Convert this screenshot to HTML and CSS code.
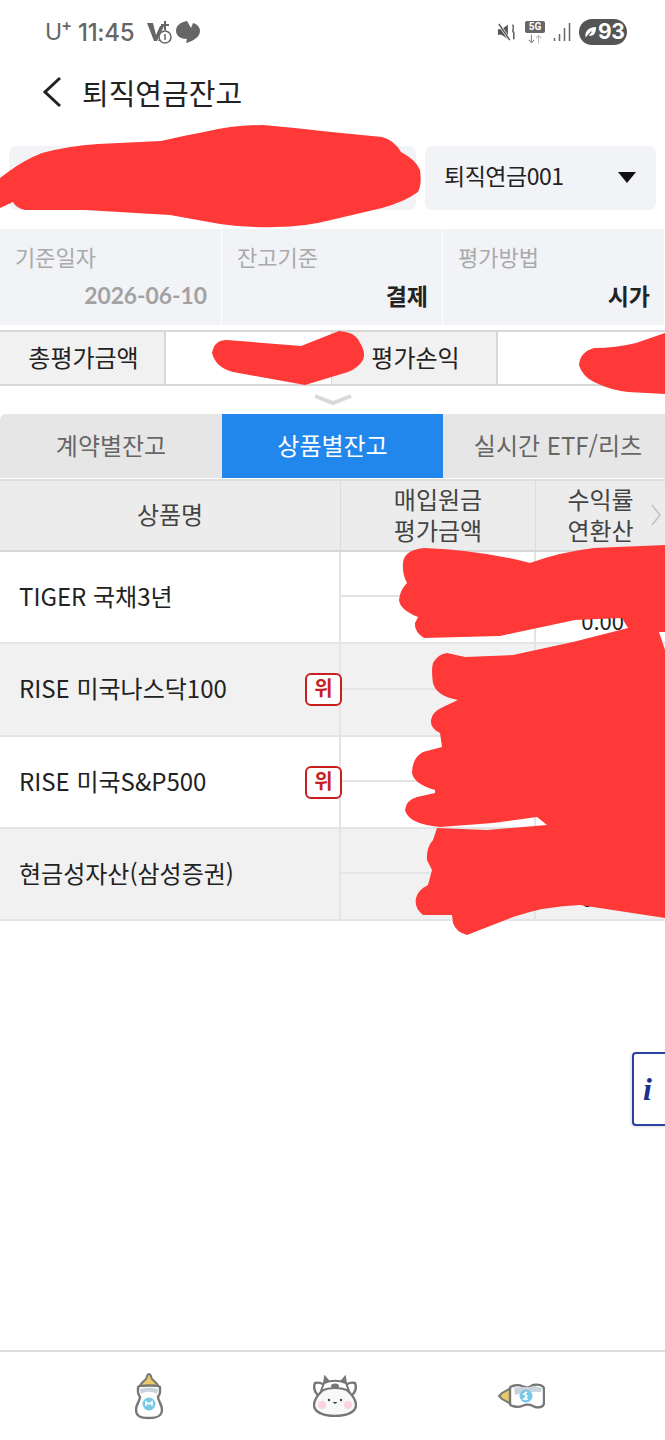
FILE: index.html
```html
<!DOCTYPE html>
<html lang="ko">
<head>
<meta charset="utf-8">
<title>퇴직연금잔고</title>
<link rel="stylesheet" href="styles.css">
</head>
<body>
<div class="page">
  <div class="status">
    <div class="status-left">
      <span class="carrier">U<sup>+</sup></span>
      <span class="clock">11:45</span>
      <svg class="st-v" viewBox="0 0 26 24"><path d="M1 3h6l3 12 4-9h4l-7 15H8z" fill="#666"/><path d="M19 1v9M15 5h8" stroke="#666" stroke-width="2"/><path d="M12 21l7-10 6 10z" fill="#666"/><circle cx="19" cy="17" r="6" fill="#fff" stroke="#666" stroke-width="1.5"/><path d="M19 14v6" stroke="#666" stroke-width="1.5"/></svg>
      <svg class="st-chat" viewBox="0 0 26 24"><path d="M12 1c-6 1-11 4-11 10 0 5 5 8 11 8l-1 4c7-2 14-6 14-12 0-4-3-7-7-8l-2 5z" fill="#666"/></svg>
    </div>
    <div class="status-right">
      <svg class="st-mute" viewBox="0 0 22 22"><path d="M1 8h4l7-5v16l-7-5H1z" fill="#555"/><path d="M2 2l12 18" stroke="#fff" stroke-width="3"/><path d="M2 2l12 18" stroke="#555" stroke-width="1.6"/><path d="M17 3c3 3-1 5 1 8s-1 5 1 8" fill="none" stroke="#555" stroke-width="1.6"/></svg>
      <div class="st-5g"><span class="st-5g-box">5G</span><svg class="st-arrows" viewBox="0 0 18 10"><path d="M5 0v9M2 6l3 3 3-3" fill="none" stroke="#888" stroke-width="1.2"/><path d="M13 10V1M10 4l3-3 3 3" fill="none" stroke="#bbb" stroke-width="1.2"/></svg></div>
      <svg class="st-signal" viewBox="0 0 18 20"><path d="M1.5 16v3M6.5 12v7M11.500 6v13M16.500 1v18" stroke="#666" stroke-width="1.500"/></svg>
      <div class="battery"><svg class="leaf" viewBox="0 0 14 14"><path d="M2 13C0 7 4 1 13 1c0 8-4 11-9 9z" fill="#fff"/><path d="M2 13l6-7" stroke="#555" stroke-width="1.2"/></svg><span>93</span></div>
    </div>
  </div>

  <header class="title-bar">
    <svg class="back" viewBox="0 0 20 32"><path d="M18 2L3 16l15 14" fill="none" stroke="#222" stroke-width="3"/></svg>
    <h1 class="title">퇴직연금잔고</h1>
  </header>

  <div class="selectors">
    <div class="select select-account"></div>
    <div class="select select-plan"><span class="plan-name">퇴직연금001</span><span class="caret"></span></div>
  </div>

  <div class="info">
    <div class="info-cell"><div class="info-label">기준일자</div><div class="info-value muted">2026-06-10</div></div>
    <div class="info-cell"><div class="info-label">잔고기준</div><div class="info-value">결제</div></div>
    <div class="info-cell"><div class="info-label">평가방법</div><div class="info-value">시가</div></div>
  </div>

  <div class="summary">
    <div class="sum-label">총평가금액</div>
    <div class="sum-value"></div>
    <div class="sum-label">평가손익</div>
    <div class="sum-value"></div>
  </div>

  <div class="fold"><svg class="fold-icon" viewBox="0 0 40 12"><path d="M2 2l18 7 18-7" fill="none" stroke="#d9d9d9" stroke-width="4"/></svg></div>

  <div class="tabs">
    <div class="tab">계약별잔고</div>
    <div class="tab tab-on">상품별잔고</div>
    <div class="tab tab-last">실시간 ETF/리츠</div>
  </div>

  <div class="table">
    <div class="thead">
      <div class="th">상품명</div>
      <div class="th">매입원금<br>평가금액</div>
      <div class="th">수익률<br>연환산</div>
      <svg class="more" viewBox="0 0 12 24"><path d="M2 2l8 10-8 10" fill="none" stroke="#c4c4c4" stroke-width="1.600"/></svg>
    </div>
    <div class="row">
      <div class="name"><span class="name-text">TIGER 국채3년</span></div>
      <div class="pair"><div></div><div></div></div>
      <div class="pair"><div></div><div class="num">0.00</div></div>
    </div>
    <div class="row alt tall">
      <div class="name"><span class="name-text">RISE 미국나스닥100</span><span class="badge">위</span></div>
      <div class="pair"><div></div><div></div></div>
      <div class="pair"><div></div><div></div></div>
    </div>
    <div class="row">
      <div class="name"><span class="name-text">RISE 미국S&amp;P500</span><span class="badge">위</span></div>
      <div class="pair"><div></div><div></div></div>
      <div class="pair"><div></div><div></div></div>
    </div>
    <div class="row alt">
      <div class="name"><span class="name-text">현금성자산(삼성증권)</span></div>
      <div class="pair"><div></div><div></div></div>
      <div class="pair"><div></div><div class="num">0.00</div></div>
    </div>
  </div>

  <footer class="nav">
    <svg class="nav-bottle" viewBox="0 0 28 48">
      <path d="M14 2c2 0 2 3 3 5 2 2 6 4 7 9H4c1-5 5-7 7-9 1-2 1-5 3-5z" fill="#e8c868" stroke="#777" stroke-width="2"/>
      <path d="M3 15c0-2 22-2 22 0v5c0 2-1 3-2 5 0 4 4 7 4 13 0 6-4 8-13 8S1 44 1 38c0-6 4-9 4-13-1-2-2-3-2-5z" fill="#fff" stroke="#777" stroke-width="2.400"/>
      <path d="M5 17c6-2 12-2 18 0l-1 5c-5-3-11-3-16 0z" fill="#c9d3dc"/>
      <circle cx="14" cy="32" r="6.500" fill="#79c8ea"/>
      <path d="M11 34v-4l3 2 3-2v4" fill="none" stroke="#fff" stroke-width="1.600"/>
    </svg>
    <svg class="nav-cow" viewBox="0 0 44 42">
      <path d="M11 9l1-7 5 6M33 9l-1-7-5 6" fill="#8a7f7f" stroke="#777" stroke-width="2"/>
      <path d="M7 22C2 18 0 13 2 8c4-1 7 0 9 2 7-3 15-3 22 0 2-2 5-3 9-2 2 5 0 10-5 14z" fill="#fff" stroke="#777" stroke-width="2.400"/>
      <path d="M8 17c3-4 7-6 14-6s11 2 14 6c4 4 7 8 7 13 0 7-9 11-21 11S1 37 1 30c0-5 3-9 7-13z" fill="#f8f8f8" stroke="#777" stroke-width="2.400"/>
      <path d="M11 8c7-3 15-3 22 0l3 8c-8-4-20-4-28 0z" fill="#fff" stroke="#777" stroke-width="2"/>
      <ellipse cx="22" cy="11" rx="4" ry="2.500" fill="#777"/>
      <circle cx="9" cy="30" r="4" fill="#fbd3dc"/><circle cx="35" cy="30" r="4" fill="#fbd3dc"/>
      <circle cx="16" cy="25" r="1.200" fill="#444"/><circle cx="28" cy="25" r="1.200" fill="#444"/>
      <path d="M19.500 27h5l-2.500 2z" fill="#444"/>
    </svg>
    <svg class="nav-side" viewBox="0 0 48 28">
      <path d="M14 6L5 11l-3 3 3 3 9 5z" fill="#e8c868" stroke="#777" stroke-width="2"/>
      <path d="M13 6c0-2 8-4 12-2 5 2 7 2 11-1 5-1 11 0 11 4v14c0 4-5 5-9 4-5-3-8-3-13-1-4 2-12 0-12-2z" fill="#fff" stroke="#777" stroke-width="2.400"/>
      <path d="M17 6c8-2 14 0 20-2l8 2-1 4c-9-1-18 0-26 3z" fill="#c9d3dc"/>
      <circle cx="29" cy="14" r="6.500" fill="#79c8ea"/>
      <path d="M30 10l-3 2 3 2-3 3h4" fill="none" stroke="#fff" stroke-width="1.600"/>
    </svg>
  </footer>

  <div class="info-btn"><span>i</span></div>

  <svg class="scribble" viewBox="0 0 665 1440">
    <path d="M0 178L8 172Q24 160 42 153Q68 146 98 144L161 141Q182 136 204 132Q234 125 263 125Q298 128 331 132L382 137Q394 140 401 152Q416 160 420 170Q422 184 418 192Q404 202 382 208L331 220Q304 227 276 227Q246 228 220 224L170 215L85 210L25 210Q16 208 13 202L0 208Z"/>
    <path d="M212 353Q214 340 227 340L301 346L339 331Q356 332 360 343Q366 352 363 360Q358 368 348 372L305 385L233 372Q216 368 212 353Z"/>
    <path d="M665 333L636 343Q616 348 594 348Q580 352 579 365Q582 376 594 382Q610 390 628 392L665 394Z"/>
    <path d="M403 563Q404 550 424 548Q480 550 530 563Q560 552 594 548L665 545L665 632L659 632L665 650L665 918L580 905Q545 906 513 917L467 935Q456 932 453 923L452 915L423 915Q414 908 416 898Q418 890 428 885L432 870L427 860Q426 848 433 840L437 828L487 830L547 825L537 817L493 823L440 827Q408 824 405 810Q406 800 417 797L435 793L435 790Q414 784 412 773Q412 758 423 752L442 747L440 733Q430 728 431 720Q432 712 443 707L458 700Q436 696 433 683Q431 670 433 663Q438 654 447 653L465 657L513 655L573 642L628 628L622 618L575 620L500 636L424 638Q414 632 415 623L418 617Q400 610 399 600Q400 590 407 583Q402 574 403 563Z"/>
  </svg>
</div>
</body>
</html>
```
FILE: styles.css
```css
* { box-sizing: border-box; }
html, body { margin: 0; padding: 0; background: #fff; }
.page {
  position: relative;
  width: 665px;
  height: 1440px;
  overflow: hidden;
  display: flex;
  flex-direction: column;
  font-family: "Noto Sans CJK KR", "Noto Sans", sans-serif;
  color: #222;
}

.status {
  height: 62px;
  display: flex;
  justify-content: space-between;
  align-items: center;
  padding: 2px 38px 0 45px;
  color: #666;
}
.status-left, .status-right { display: flex; align-items: center; }
.carrier { font: 400 23px "Inter", sans-serif; width: 33px; letter-spacing: -1px; }
.carrier sup { font-size: 16px; line-height: 0; font-weight: 600; }
.clock { font: 500 24px "Inter", sans-serif; width: 68px; letter-spacing: -0.3px; }
.st-v { width: 26px; height: 24px; margin-right: 3px; }
.st-chat { width: 26px; height: 24px; }
.st-mute { width: 20px; height: 22px; margin-right: 8px; }
.st-5g { width: 20px; margin-right: 8px; display: flex; flex-direction: column; align-items: center; gap: 1px; }
.st-5g-box { background: #666; color: #fff; font: 700 10px/12px "Roboto", sans-serif; width: 20px; text-align: center; border-radius: 2px; }
.st-arrows { width: 16px; height: 10px; }
.st-signal { width: 18px; height: 20px; margin-right: 8px; }
.battery {
  width: 48px;
  height: 26px;
  border-radius: 13px;
  background: #555;
  color: #fff;
  display: flex;
  align-items: center;
  padding-left: 5px;
  gap: 1px;
  font: 700 21px/26px "Inter", sans-serif;
  letter-spacing: -0.5px;
}
.leaf { width: 13px; height: 13px; flex: none; }

.title-bar { height: 60px; display: flex; align-items: center; padding-left: 42px; }
.back { width: 20px; height: 32px; margin-right: 20px; }
.title { margin: 0; font-size: 29px; font-weight: 400; line-height: 1; color: #222; }

.selectors { display: flex; gap: 9px; margin-top: 24px; padding: 0 9px; }
.select { height: 64px; border-radius: 7px; background: #f1f3f6; }
.select-account { width: 407px; }
.select-plan {
  width: 231px;
  display: flex;
  align-items: center;
  justify-content: space-between;
  padding: 0 20px 0 19px;
  font-size: 23px;
  letter-spacing: -0.5px;
}
.plan-name { padding-bottom: 6px; }
.caret { width: 0; height: 0; margin-bottom: 2px; border-left: 9px solid transparent; border-right: 9px solid transparent; border-top: 11px solid #111; }

.info { display: grid; grid-template-columns: 222px 221px 222px; margin-top: 19px; height: 96px; gap: 0; }
.info-cell {
  background: #f1f3f6;
  border-right: 1px solid #fff;
  padding: 11px 14px 0 15px;
  display: flex;
  flex-direction: column;
}
.info-label { font-size: 22px; line-height: 32px; color: #aaa; }
.info-value { text-align: right; font-size: 23px; line-height: 32px; margin-top: 7px; font-weight: 700; color: #222; }
.info-value.muted { color: #a2a2a2; font-family: "Lato", "Noto Sans CJK KR", sans-serif; font-size: 22.800px; }

.summary {
  display: grid;
  grid-template-columns: 166px 166px 166px 167px;
  height: 56px;
  margin-top: 5px;
  border-top: 2px solid #d8d8d8;
  border-bottom: 2px solid #d8d8d8;
}
.sum-label { background: #f1f1f1; border-right: 2px solid #d8d8d8; padding-left: 3px; font-size: 24px; line-height: 50px; text-align: center; color: #222; }
.sum-value { background: #fff; border-right: 1px solid #d8d8d8; }
.sum-value:last-child { border-right: 0; }

.fold { height: 28px; display: flex; justify-content: center; padding-top: 8px; }
.fold-icon { width: 40px; height: 12px; }

.tabs { display: grid; grid-template-columns: 222px 221px 222px; height: 64px; background: #e6e6e6; border-radius: 6px 0 0 0; }
.tab { display: flex; align-items: center; justify-content: center; padding-bottom: 4px; font-size: 24px; color: #666; }
.tab-on { background: #2287ec; color: #fff; }
.tab-last { padding-left: 8px; }

.table { margin-top: 1px; }
.thead {
  position: relative;
  display: grid;
  grid-template-columns: 341px 195px 129px;
  height: 73px;
  background: #ececec;
  border-top: 2px solid #ddd;
  border-bottom: 2px solid #d8d8d8;
}
.th {
  display: flex;
  align-items: center;
  justify-content: center;
  padding-bottom: 4px;
  text-align: center;
  font-size: 24px;
  line-height: 31px;
  color: #444;
  border-right: 1px solid #dcdcdc;
}
.th:nth-child(3) { border-right: 0; }
.more { position: absolute; right: 3px; top: 22px; width: 12px; height: 24px; }

.row { display: grid; grid-template-columns: 341px 195px 129px; height: 92px; border-bottom: 2px solid #e4e4e4; background: #fff; }
.row.tall { height: 93px; }
.row.alt { background: #f1f1f1; }
.name {
  display: flex;
  align-items: center;
  justify-content: space-between;
  padding-left: 19px;
  font-size: 24px;
  color: #222;
  border-right: 2px solid #e4e4e4;
}
.name-text { padding-bottom: 4px; }
.badge {
  flex: none;
  width: 37px;
  height: 33px;
  margin-right: -3px;
  border: 2.500px solid #c81e1e;
  border-radius: 6px;
  background: #fff;
  color: #c81e1e;
  font-size: 20px;
  font-weight: 700;
  line-height: 26px;
  text-align: center;
  position: relative;
}
.pair { display: grid; grid-template-rows: 1fr 1fr; border-right: 2px solid #e4e4e4; }
.pair:last-child { border-right: 0; }
.pair > div:first-child { border-bottom: 2px solid #e4e4e4; }
.num { text-align: right; padding: 7px 41px 0 0; font-size: 22px; line-height: 32px; color: #222; }

.nav {
  margin-top: auto;
  height: 90px;
  border-top: 2px solid #ddd;
  padding-left: 4px;
  display: grid;
  grid-template-columns: 186px 186px 186px;
  justify-content: center;
  align-items: center;
  justify-items: center;
}
.nav-bottle { width: 28px; height: 48px; }
.nav-cow { width: 44px; height: 42px; }
.nav-side { width: 48px; height: 28px; }

.info-btn {
  position: absolute;
  left: 632px;
  top: 1052px;
  width: 40px;
  height: 74px;
  border: 2px solid #2a3f9e;
  border-radius: 4px;
  background: #fff;
  box-shadow: -1px 1px 3px rgba(0, 0, 0, 0.15);
  padding-left: 9px;
  color: #1a2f8f;
  font: italic 700 32px/70px "Liberation Serif", serif;
}

.scribble { position: absolute; left: 0; top: 0; width: 665px; height: 1440px; pointer-events: none; }
.scribble path { fill: #ff3838; }
```
